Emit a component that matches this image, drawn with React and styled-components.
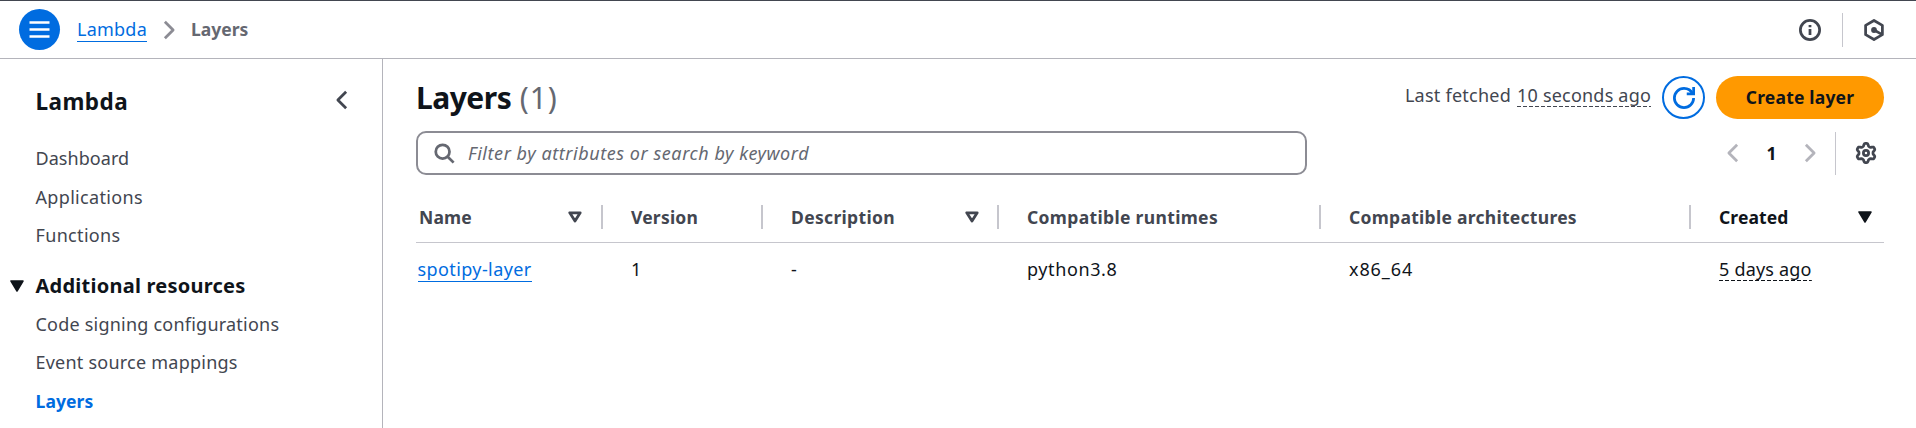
import React from "react";
import styled, { createGlobalStyle, css } from "styled-components";

const color = {
  text: "#0f141a",
  body: "#424650",
  muted: "#656871",
  link: "#006ce0",
  control: "#8c8c94",
  line: "#b4b4bb",
  divider: "#c6c6cd",
  accent: "#ff9900",
};

const GlobalStyle = createGlobalStyle`
  * { box-sizing: border-box; }
  body {
    margin: 0;
    background: #fff;
    color: ${color.text};
    font: 18px/24px "Noto Sans", sans-serif;
  }
  h1, h2, ul { margin: 0; padding: 0; }
  button { font: inherit; border: 0; padding: 0; background: none; color: inherit; }
`;

const Label = styled.span`
  white-space: pre;
  letter-spacing: ${(p) => p.$track || 0}px;
`;

const Page = styled.div`
  height: 428px;
  overflow: hidden;
  display: flex;
  flex-direction: column;
  border-top: 1px solid ${color.body};
`;

const TopBar = styled.header`
  height: 58px;
  flex: none;
  display: flex;
  align-items: center;
  padding: 0 31px 0 19px;
  border-bottom: 1px solid ${color.line};
`;

const MenuButton = styled.button`
  width: 41px;
  height: 41px;
  border-radius: 50%;
  background: ${color.link};
  color: #fff;
  display: grid;
  place-items: center;
`;

const Breadcrumbs = styled.nav`
  display: flex;
  align-items: center;
  margin-left: 17px;
  height: 25px;
`;

const Link = styled.a`
  display: inline-block;
  color: ${color.link};
  border-bottom: 1px solid ${color.link};
  height: 25px;
`;

const Crumb = styled.span`
  height: 25px;
  font-size: 17.5px;
  font-weight: 700;
  color: ${color.muted};
`;

const CrumbArrow = styled.span`
  display: flex;
  width: 22px;
  margin: 0 11px;
  color: ${color.control};
`;

const Tools = styled.div`
  margin-left: auto;
  display: flex;
  align-items: center;
  color: ${color.body};
`;

const ToolDivider = styled.span`
  width: 1px;
  height: 34px;
  margin: 0 20px 0 21px;
  background: ${color.divider};
`;

const Body = styled.div`
  flex: 1;
  display: flex;
  min-height: 0;
`;

const Sidebar = styled.aside`
  width: 383px;
  flex: none;
  border-right: 1px solid ${color.line};
`;

const SideHead = styled.div`
  display: flex;
  align-items: center;
  justify-content: space-between;
  height: 30px;
  margin: 26px 29px 0 35.5px;
  color: ${color.body};
`;

const SideTitle = styled.h2`
  padding-top: 3px;
  font-size: 22.5px;
  line-height: 30px;
  color: ${color.text};
`;

const NavList = styled.ul`
  list-style: none;
  padding-left: 35.5px;
  margin-top: ${(p) => p.$top}px;
`;

const NavItem = styled.li`
  height: 38.6px;
  line-height: 24px;
  font-size: ${(p) => (p.$active ? 17.5 : 18)}px;
  color: ${(p) => (p.$active ? color.link : color.body)};
  font-weight: ${(p) => (p.$active ? 700 : 400)};
`;

const NavSection = styled.div`
  display: flex;
  align-items: center;
  gap: 11.5px;
  height: 28px;
  margin-top: 10px;
  padding-left: 10px;
  font-size: 20px;
  font-weight: 700;
`;

const Main = styled.main`
  flex: 1;
  min-width: 0;
  padding: 17px 32px 0 33px;
`;

const MainHead = styled.div`
  display: flex;
  align-items: center;
  height: 43px;
`;

const Title = styled.h1`
  font-size: 30px;
  line-height: 40px;
  display: flex;
  gap: 8.5px;
`;

const Count = styled.span`
  font-weight: 400;
  color: ${color.muted};
`;

const Actions = styled.div`
  margin-left: auto;
  display: flex;
  align-items: center;
`;

const Fetched = styled.div`
  display: flex;
  gap: 6px;
  margin-right: 11px;
  padding-bottom: 5px;
  color: ${color.body};
`;

const dashed = css`
  background: repeating-linear-gradient(90deg, currentColor 0 4px, transparent 4px 6px) bottom / 100% 1px no-repeat;
`;

const Timestamp = styled.span`
  ${dashed}
  display: inline-block;
  height: 24px;
`;

const RefreshButton = styled.button`
  width: 43px;
  height: 43px;
  border: 2px solid ${color.link};
  border-radius: 50%;
  color: ${color.link};
  display: grid;
  place-items: center;
`;

const PrimaryButton = styled.button`
  width: 168px;
  height: 43px;
  margin-left: 11px;
  padding-bottom: 2px;
  border-radius: 22px;
  background: ${color.accent};
  color: ${color.text};
  font-size: 17.5px;
  font-weight: 700;
`;

const FilterBar = styled.div`
  display: flex;
  align-items: center;
  justify-content: space-between;
  height: 44px;
  margin-top: 12px;
`;

const SearchBox = styled.div`
  width: 891px;
  height: 44px;
  display: flex;
  align-items: center;
  gap: 13px;
  padding-left: 15px;
  border: 2px solid ${color.control};
  border-radius: 10px;
  color: ${color.muted};
  font-style: italic;
`;

const Pager = styled.div`
  display: flex;
  align-items: center;
  padding-right: 7px;
  color: ${color.body};
`;

const PageArrow = styled.button`
  display: flex;
  color: ${color.line};
`;

const PageNumber = styled.span`
  width: 55px;
  text-align: center;
  font-size: 17.5px;
  font-weight: 700;
  color: ${color.text};
`;

const PagerDivider = styled.span`
  width: 1px;
  height: 43px;
  margin: 0 19px 0 14px;
  background: ${color.divider};
`;

const TableRow = styled.div`
  display: grid;
  grid-template-columns: 187px 160px 236px 322px 370px 1fr;
`;

const HeadRow = styled(TableRow)`
  height: 50px;
  margin-top: 18px;
  border-bottom: 1px solid ${color.divider};
`;

const HeadCell = styled.div`
  display: flex;
  align-items: center;
  justify-content: space-between;
  height: 24px;
  margin-top: 12px;
  padding: 0 ${(p) => (p.$last ? 12 : p.$first ? 19 : 18)}px 0 ${(p) => (p.$first ? 3 : 28)}px;
  border-right: ${(p) => (p.$last ? "0" : `2px solid ${color.divider}`)};
  color: ${(p) => (p.$last ? color.text : color.body)};
  font-size: 17.5px;
  font-weight: 700;
`;

const Cell = styled.div`
  padding: 14px 0 0 ${(p) => (p.$first ? 1.5 : 28)}px;
  line-height: 24px;
`;

const Svg = styled.svg`
  display: block;
  flex: none;
`;

const Icon = ({ size = 22, w = 2, children }) => (
  <Svg width={size} height={size} viewBox="0 0 16 16" fill="none" stroke="currentColor" strokeWidth={w}>
    {children}
  </Svg>
);

const MenuIcon = () => (
  <Svg width="21" height="17" viewBox="0 0 21 17" stroke="currentColor" strokeWidth="2.5">
    <path d="M.5 1.5h20M.5 8.5h20M.5 15.5h20" />
  </Svg>
);

const AngleLeft = () => (
  <Icon><path d="M11 2 5 8l6 6" strokeLinejoin="round" /></Icon>
);

const AngleRight = () => (
  <Icon><path d="M5 2l6 6-6 6" strokeLinejoin="round" /></Icon>
);

const InfoIcon = () => (
  <Icon>
    <circle cx="8" cy="8" r="7" />
    <path d="M8 11.6V7.2M8 6V4.3" />
  </Icon>
);

const HexIcon = () => (
  <Icon>
    <path d="M8 1.1 14.1 4.6v6.8L8 14.9 1.9 11.4V4.6z" strokeLinejoin="round" />
    <circle cx="8" cy="8" r="2.1" fill="currentColor" stroke="none" />
    <path d="M8 8l5.4 3" />
  </Icon>
);

const SearchIcon = () => (
  <Icon>
    <circle cx="7" cy="7" r="5" />
    <path d="m15 15-4.5-4.5" />
  </Icon>
);

const RefreshIcon = () => (
  <Icon>
    <path d="M15 8c0 3.9-3.1 7-7 7s-7-3.1-7-7 3.1-7 7-7c2.8 0 5.2 1.6 6.3 4" />
    <path d="M10 5h5V0" />
  </Icon>
);

const gearPoints = Array.from({ length: 72 }, (_, i) => {
  const a = (i / 72) * Math.PI * 2 - Math.PI / 2;
  const r = 6.05 + Math.tanh(1.8 * Math.cos(6 * (a + Math.PI / 2)));
  return `${(8 + r * Math.cos(a)).toFixed(2)},${(8 + r * Math.sin(a)).toFixed(2)}`;
}).join(" ");

const GearIcon = () => (
  <Icon>
    <polygon points={gearPoints} strokeLinejoin="round" />
    <circle cx="8" cy="8" r="1.9" />
  </Icon>
);

const Caret = ({ filled }) => (
  <Svg width="14" height="12" viewBox="0 0 14 12" fill={filled ? "currentColor" : "none"} stroke="currentColor" strokeWidth={filled ? 1.5 : 2.8} strokeLinejoin="round">
    <path d={filled ? "M1 1h12L7 11z" : "M1.8 1.8h10.4L7 10z"} />
  </Svg>
);

const columns = [
  { name: "Name", track: 0.19, sort: "open" },
  { name: "Version", track: 0.2 },
  { name: "Description", track: 0.33, sort: "open" },
  { name: "Compatible runtimes", track: 0.34 },
  { name: "Compatible architectures", track: 0.28 },
  { name: "Created", track: 0.1, sort: "filled" },
];

export default function App() {
  return (
    <Page>
      <GlobalStyle />
      <TopBar>
        <MenuButton aria-label="Menu"><MenuIcon /></MenuButton>
        <Breadcrumbs>
          <Link><Label $track={0.23}>Lambda</Label></Link>
          <CrumbArrow><AngleRight /></CrumbArrow>
          <Crumb><Label>Layers</Label></Crumb>
        </Breadcrumbs>
        <Tools>
          <InfoIcon />
          <ToolDivider />
          <HexIcon />
        </Tools>
      </TopBar>
      <Body>
        <Sidebar>
          <SideHead>
            <SideTitle><Label $track={0.45}>Lambda</Label></SideTitle>
            <AngleLeft />
          </SideHead>
          <NavList $top={31}>
            <NavItem><Label $track={0.06}>Dashboard</Label></NavItem>
            <NavItem><Label $track={0.33}>Applications</Label></NavItem>
            <NavItem><Label $track={0.33}>Functions</Label></NavItem>
          </NavList>
          <NavSection>
            <Caret filled />
            <Label $track={0.24}>Additional resources</Label>
          </NavSection>
          <NavList $top={12}>
            <NavItem><Label $track={0.22}>Code signing configurations</Label></NavItem>
            <NavItem><Label $track={0.23}>Event source mappings</Label></NavItem>
            <NavItem $active><Label $track={0.1}>Layers</Label></NavItem>
          </NavList>
        </Sidebar>
        <Main>
          <MainHead>
            <Title>
              <Label $track={-0.5}>Layers</Label>
              <Count><Label $track={0.9}>(1)</Label></Count>
            </Title>
            <Actions>
              <Fetched>
                <Label $track={0.25}>Last fetched</Label>
                <Timestamp><Label $track={0.2}>10 seconds ago</Label></Timestamp>
              </Fetched>
              <RefreshButton aria-label="Refresh"><RefreshIcon /></RefreshButton>
              <PrimaryButton><Label $track={0.2}>Create layer</Label></PrimaryButton>
            </Actions>
          </MainHead>
          <FilterBar>
            <SearchBox>
              <SearchIcon />
              <Label $track={0.56}>Filter by attributes or search by keyword</Label>
            </SearchBox>
            <Pager>
              <PageArrow aria-label="Previous page"><AngleLeft /></PageArrow>
              <PageNumber>1</PageNumber>
              <PageArrow aria-label="Next page"><AngleRight /></PageArrow>
              <PagerDivider />
              <GearIcon />
            </Pager>
          </FilterBar>
          <HeadRow>
            {columns.map((c, i) => (
              <HeadCell key={c.name} $first={i === 0} $last={i === columns.length - 1}>
                <Label $track={c.track}>{c.name}</Label>
                {c.sort && <Caret filled={c.sort === "filled"} />}
              </HeadCell>
            ))}
          </HeadRow>
          <TableRow>
            <Cell $first><Link><Label $track={0.4}>spotipy-layer</Label></Link></Cell>
            <Cell>1</Cell>
            <Cell>-</Cell>
            <Cell><Label $track={0.6}>python3.8</Label></Cell>
            <Cell><Label $track={0.9}>x86_64</Label></Cell>
            <Cell><Timestamp><Label $track={0.2}>5 days ago</Label></Timestamp></Cell>
          </TableRow>
        </Main>
      </Body>
    </Page>
  );
}
